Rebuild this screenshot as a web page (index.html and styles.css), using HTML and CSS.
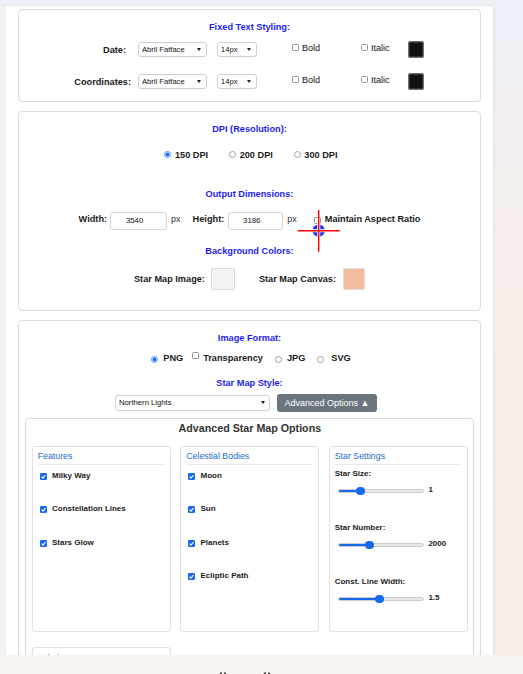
FILE: index.html
```html
<!DOCTYPE html>
<html lang="en">
<head>
<meta charset="utf-8">
<title>Star Map Export Settings</title>
<link rel="stylesheet" href="styles.css">
</head>
<body>
<div class="viewport">
  <div class="panel">

    <section class="card card-text">
      <h3 class="heading">Fixed Text Styling:</h3>
      <div class="text-row">
        <span class="row-label label-date">Date:</span>
        <div class="sel sel-font"><select><option>Abril Fatface</option></select><span class="caret"></span></div>
        <div class="sel sel-size"><select><option>14px</option></select><span class="caret"></span></div>
        <label class="chk chk-bold"><svg class="cb" viewBox="0 0 7 7"><rect x=".5" y=".5" width="6" height="6" rx="1" fill="#fff" stroke="#8a8a8a" stroke-width=".9"/></svg>Bold</label>
        <label class="chk chk-italic"><svg class="cb" viewBox="0 0 7 7"><rect x=".5" y=".5" width="6" height="6" rx="1" fill="#fff" stroke="#8a8a8a" stroke-width=".9"/></svg>Italic</label>
        <span class="swatch-dark"></span>
      </div>
      <div class="text-row row-two">
        <span class="row-label">Coordinates:</span>
        <div class="sel sel-font"><select><option>Abril Fatface</option></select><span class="caret"></span></div>
        <div class="sel sel-size"><select><option>14px</option></select><span class="caret"></span></div>
        <label class="chk chk-bold"><svg class="cb" viewBox="0 0 7 7"><rect x=".5" y=".5" width="6" height="6" rx="1" fill="#fff" stroke="#8a8a8a" stroke-width=".9"/></svg>Bold</label>
        <label class="chk chk-italic"><svg class="cb" viewBox="0 0 7 7"><rect x=".5" y=".5" width="6" height="6" rx="1" fill="#fff" stroke="#8a8a8a" stroke-width=".9"/></svg>Italic</label>
        <span class="swatch-dark"></span>
      </div>
    </section>

    <section class="card card-output">
      <h3 class="heading">DPI (Resolution):</h3>
      <div class="radio-row">
        <label class="opt"><svg class="rd" viewBox="0 0 7 7"><circle cx="3.5" cy="3.5" r="3" fill="#fff" stroke="#3d86f5" stroke-width=".9"/><circle cx="3.5" cy="3.5" r="1.9" fill="#1769f0"/></svg>150 DPI</label>
        <label class="opt"><svg class="rd" viewBox="0 0 7 7"><circle cx="3.5" cy="3.5" r="3" fill="#fff" stroke="#8a8a8a" stroke-width=".8"/></svg>200 DPI</label>
        <label class="opt"><svg class="rd" viewBox="0 0 7 7"><circle cx="3.5" cy="3.5" r="3" fill="#fff" stroke="#8a8a8a" stroke-width=".8"/></svg>300 DPI</label>
      </div>

      <h3 class="heading heading-dims">Output Dimensions:</h3>
      <div class="dims-row">
        <span class="b-label dim-w">Width:</span>
        <input class="num num-w" type="text" value="3540">
        <span class="px px-1">px</span>
        <span class="b-label dim-h">Height:</span>
        <input class="num num-h" type="text" value="3186">
        <span class="px px-2">px</span>
        <svg class="cb cb-aspect" viewBox="0 0 7 7"><rect x=".5" y=".5" width="6" height="6" rx="1" fill="#fff" stroke="#8a8a8a" stroke-width=".9"/></svg>
        <span class="b-label">Maintain Aspect Ratio</span>
      </div>

      <h3 class="heading heading-bg">Background Colors:</h3>
      <div class="colors-row">
        <span class="b-label">Star Map Image:</span>
        <span class="swatch swatch-image"></span>
        <span class="b-label">Star Map Canvas:</span>
        <span class="swatch swatch-canvas"></span>
      </div>
    </section>

    <section class="card card-format">
      <h3 class="heading">Image Format:</h3>
      <div class="format-row">
        <svg class="rd rd-png" viewBox="0 0 7 7"><circle cx="3.5" cy="3.5" r="3" fill="#fff" stroke="#3d86f5" stroke-width=".9"/><circle cx="3.5" cy="3.5" r="1.9" fill="#1769f0"/></svg>
        <span class="b-label f-png">PNG</span>
        <svg class="cb cb-trans" viewBox="0 0 7 7"><rect x=".5" y=".5" width="6" height="6" rx="1" fill="#fff" stroke="#8a8a8a" stroke-width=".9"/></svg>
        <span class="b-label f-trans">Transparency</span>
        <svg class="rd rd-jpg" viewBox="0 0 7 7"><circle cx="3.5" cy="3.5" r="3" fill="#fff" stroke="#8a8a8a" stroke-width=".8"/></svg>
        <span class="b-label f-jpg">JPG</span>
        <svg class="rd rd-svg" viewBox="0 0 7 7"><circle cx="3.5" cy="3.5" r="3" fill="#fff" stroke="#8a8a8a" stroke-width=".8"/></svg>
        <span class="b-label">SVG</span>
      </div>

      <h3 class="heading heading-style">Star Map Style:</h3>
      <div class="style-row">
        <div class="sel sel-style"><select><option>Northern Lights</option></select><span class="caret"></span></div>
        <button class="btn" type="button">Advanced Options ▲</button>
      </div>

      <div class="adv">
        <h2 class="adv-title">Advanced Star Map Options</h2>
        <div class="adv-grid">
          <div class="col">
            <h4 class="col-head">Features</h4>
            <div class="items">
              <label class="item"><svg class="cb" viewBox="0 0 7 7"><rect width="7" height="7" rx="1.2" fill="#1769f0"/><polyline points="1.6,3.7 3,5.1 5.5,2" fill="none" stroke="#fff" stroke-width="1.1"/></svg>Milky Way</label>
              <label class="item"><svg class="cb" viewBox="0 0 7 7"><rect width="7" height="7" rx="1.2" fill="#1769f0"/><polyline points="1.6,3.7 3,5.1 5.5,2" fill="none" stroke="#fff" stroke-width="1.1"/></svg>Constellation Lines</label>
              <label class="item"><svg class="cb" viewBox="0 0 7 7"><rect width="7" height="7" rx="1.2" fill="#1769f0"/><polyline points="1.6,3.7 3,5.1 5.5,2" fill="none" stroke="#fff" stroke-width="1.1"/></svg>Stars Glow</label>
            </div>
          </div>
          <div class="col">
            <h4 class="col-head">Celestial Bodies</h4>
            <div class="items">
              <label class="item"><svg class="cb" viewBox="0 0 7 7"><rect width="7" height="7" rx="1.2" fill="#1769f0"/><polyline points="1.6,3.7 3,5.1 5.5,2" fill="none" stroke="#fff" stroke-width="1.1"/></svg>Moon</label>
              <label class="item"><svg class="cb" viewBox="0 0 7 7"><rect width="7" height="7" rx="1.2" fill="#1769f0"/><polyline points="1.6,3.7 3,5.1 5.5,2" fill="none" stroke="#fff" stroke-width="1.1"/></svg>Sun</label>
              <label class="item"><svg class="cb" viewBox="0 0 7 7"><rect width="7" height="7" rx="1.2" fill="#1769f0"/><polyline points="1.6,3.7 3,5.1 5.5,2" fill="none" stroke="#fff" stroke-width="1.1"/></svg>Planets</label>
              <label class="item"><svg class="cb" viewBox="0 0 7 7"><rect width="7" height="7" rx="1.2" fill="#1769f0"/><polyline points="1.6,3.7 3,5.1 5.5,2" fill="none" stroke="#fff" stroke-width="1.1"/></svg>Ecliptic Path</label>
            </div>
          </div>
          <div class="col">
            <h4 class="col-head">Star Settings</h4>
            <div class="setting">
              <div class="set-label">Star Size:</div>
              <div class="slider-row">
                <div class="track"><div class="fill" style="width:26%"></div><span class="thumb" style="left:26%"></span></div>
                <span class="val">1</span>
              </div>
            </div>
            <div class="setting">
              <div class="set-label">Star Number:</div>
              <div class="slider-row">
                <div class="track"><div class="fill" style="width:36.5%"></div><span class="thumb" style="left:36.5%"></span></div>
                <span class="val">2000</span>
              </div>
            </div>
            <div class="setting">
              <div class="set-label">Const. Line Width:</div>
              <div class="slider-row">
                <div class="track"><div class="fill" style="width:48.5%"></div><span class="thumb" style="left:48.5%"></span></div>
                <span class="val">1.5</span>
              </div>
            </div>
          </div>
          <div class="col col-short">
            <h4 class="col-head">Labels</h4>
          </div>
        </div>
      </div>
    </section>

  </div>
</div>
<footer class="footer">
  <svg class="ficon" viewBox="0 0 14 6"><path d="M3.5 5.5 Q3.5 1 6 1" fill="none" stroke="#333" stroke-width="1.3"/><path d="M8 1 Q10.5 1 10.5 5.5" fill="none" stroke="#333" stroke-width="1.3"/></svg>
  <svg class="ficon" viewBox="0 0 14 6"><path d="M3.5 5.5 Q3.5 1 6 1" fill="none" stroke="#333" stroke-width="1.3"/><path d="M8 1 Q10.5 1 10.5 5.5" fill="none" stroke="#333" stroke-width="1.3"/></svg>
</footer>
<div class="cursor" aria-hidden="true">
  <svg viewBox="0 0 44 44" width="44" height="44">
    <circle cx="21.7" cy="21.7" r="6.2" fill="#1f3cf0"/>
    <line x1="21.7" y1="14" x2="21.7" y2="29.4" stroke="#fff" stroke-width="3"/>
    <line x1="14" y1="21.7" x2="29.4" y2="21.7" stroke="#fff" stroke-width="3"/>
    <line x1="0.7" y1="21.7" x2="42.7" y2="21.7" stroke="#f00" stroke-width="1.4"/>
    <line x1="21.7" y1="1" x2="21.7" y2="42.7" stroke="#f00" stroke-width="1.4"/>
  </svg>
</div>
</body>
</html>
```
FILE: styles.css
```css
* { box-sizing: border-box; }
html, body { margin: 0; padding: 0; }
body {
  width: 523px;
  height: 674px;
  overflow: hidden;
  position: relative;
  display: flex;
  flex-direction: column;
  font-family: "Liberation Sans", Arial, sans-serif;
  color: #1b1b1b;
  background: linear-gradient(180deg, #eef0f8 0px, #eef0f7 35px, #f4eff1 110px, #f7efea 300px, #f7eee9 100%);
}

.viewport { flex: 1; min-height: 0; overflow: hidden; padding-top: 6px; }
.panel {
  width: 493px;
  min-height: 100%;
  background: #fff;
  border-left: 6px solid #f2f2f3;
  box-shadow: 1px 0 2px rgba(0, 0, 0, 0.08);
  padding: 3px 12px 0 12px;
}

.card { border: 1px solid #dcdcdc; border-radius: 4px; background: #fff; margin-bottom: 9px; }
.card-text { padding: 11px 0 11px; }
.card-output { padding: 11px 0 20px; }
.card-format { padding: 11px 0 0; margin-top: 9.5px; }

.heading {
  margin: 0;
  font-size: 9.2px;
  line-height: 12px;
  font-weight: bold;
  color: #1e1ef5;
  text-align: center;
}

.b-label, .row-label { font-weight: bold; font-size: 9.2px; color: #1b1b1b; white-space: nowrap; }

/* fixed text styling rows */
.text-row { display: flex; align-items: center; height: 17px; margin-top: 8px; padding-left: 41px; }
.text-row.row-two { margin-top: 15px; }
.row-label { width: 71px; text-align: right; }
.label-date { padding-right: 5px; }

.sel {
  display: flex;
  align-items: center;
  height: 15px;
  border: 1px solid #cfcfcf;
  border-radius: 3px;
  background: #fff;
  padding: 0 5px 0 3px;
}
.sel select {
  -webkit-appearance: none;
  appearance: none;
  border: 0;
  background: transparent;
  font: 7.6px "Liberation Sans", Arial, sans-serif;
  color: #111;
  padding: 0;
  margin: 0;
  flex: 1;
  min-width: 0;
  outline: none;
}
.caret {
  flex: none;
  width: 0;
  height: 0;
  border-left: 2.5px solid transparent;
  border-right: 2.5px solid transparent;
  border-top: 3px solid #222;
}
.sel-font { width: 69px; margin-left: 7px; }
.sel-size { width: 40px; margin-left: 10px; }

.cb { width: 7px; height: 7px; flex: none; display: block; }
.rd { width: 7px; height: 7px; flex: none; display: block; }

.chk { display: flex; align-items: center; font-size: 9px; color: #111; margin-bottom: 4px; }
.chk .cb { margin-right: 3px; }
.chk-bold { width: 69px; margin-left: 35px; }
.chk-italic { width: 47px; }

.swatch-dark {
  width: 16px;
  height: 17px;
  background: #111;
  border: 1px solid #6e6e6e;
  border-radius: 2px;
  box-shadow: inset 0 0 0 1px #333;
}

/* DPI */
.radio-row {
  display: flex;
  justify-content: center;
  align-items: center;
  gap: 21px;
  height: 12px;
  margin-top: 13.5px;
  padding-left: 3px;
  font-weight: bold;
  font-size: 9.2px;
}
.opt { display: flex; align-items: center; }
.opt .rd { margin-right: 3.5px; }

.heading-dims { margin-top: 27.8px; }
.dims-row {
  display: flex;
  justify-content: center;
  align-items: center;
  height: 18.6px;
  margin-top: 11.4px;
}
.dims-row .b-label, .dims-row .px { margin-bottom: 3px; }
.dim-w { margin-right: 3px; }
.dim-h { margin-right: 4px; }
.num {
  height: 18.6px;
  border: 1px solid #d3d3d3;
  border-radius: 3px;
  font: 7.8px "Liberation Sans", Arial, sans-serif;
  color: #111;
  text-align: center;
  padding: 0 8px 0 0;
  margin: 0 4px 0 0;
  outline: none;
}
.num-w { width: 57px; }
.num-h { width: 55px; }
.px { font-size: 9px; color: #333; }
.px-1 { margin-right: 12px; }
.px-2 { margin-right: 17px; }
.cb-aspect { margin-right: 4px; margin-bottom: 1.5px; }

.heading-bg { margin-top: 14.4px; }
.colors-row {
  display: flex;
  justify-content: center;
  align-items: center;
  height: 22px;
  margin-top: 11.3px;
}
.swatch { height: 22px; border: 1px solid #dcdcdc; border-radius: 2px; margin-left: 6px; }
.swatch-image { width: 24px; background: #f5f3f1; margin-right: 24px; }
.swatch-canvas { width: 22px; background: #f4bc9f; margin-left: 7px; }

/* image format */
.format-row {
  display: flex;
  justify-content: center;
  align-items: center;
  height: 12px;
  margin-top: 7.2px;
  padding-left: 3px;
}
.format-row .rd { margin-top: 3.6px; }
.rd-png { margin-right: 5px; }
.f-png { margin-right: 9px; }
.cb-trans { margin-right: 4px; margin-bottom: 3.4px; }
.f-trans { margin-right: 12px; }
.rd-jpg { margin-right: 5px; }
.f-jpg { margin-right: 12px; }
.rd-svg { margin-right: 7px; }

.heading-style { margin-top: 13.3px; }
.style-row {
  display: flex;
  justify-content: center;
  align-items: center;
  height: 18px;
  margin-top: 5px;
  padding-right: 7px;
  gap: 7px;
}
.sel-style { width: 155px; height: 16px; padding-right: 4.5px; }
.sel-style select { font-size: 7.7px; }
.btn {
  width: 100px;
  height: 18px;
  border: 0;
  border-radius: 3px;
  background: #6c757d;
  color: #fff;
  font: 9px "Liberation Sans", Arial, sans-serif;
  padding: 0;
}

/* advanced */
.adv {
  margin: 6.3px 6px 0;
  border: 1px solid #dadada;
  border-radius: 4px;
  padding: 3px 5px 6px 5.7px;
}
.adv-title {
  margin: 0;
  text-align: center;
  font-size: 10.7px;
  line-height: 12px;
  font-weight: bold;
  color: #333;
}
.adv-grid {
  display: grid;
  grid-template-columns: repeat(3, 139px);
  column-gap: 9.5px;
  row-gap: 15.3px;
  margin-top: 11.4px;
}
.col {
  border: 1px solid #e1e1e1;
  border-radius: 3px;
  padding: 4.5px 6px 0 5px;
  min-height: 186.3px;
}
.col-short { min-height: 50px; }
.col-head {
  margin: 0;
  font-size: 8.8px;
  line-height: 10px;
  font-weight: normal;
  color: #1f6bc9;
  padding-bottom: 2.5px;
  border-bottom: 1px solid #e9e9e9;
}
.items { display: flex; flex-direction: column; gap: 23.3px; margin-top: 5.8px; }
.item { display: flex; align-items: center; height: 10px; font-weight: bold; font-size: 8px; color: #1b1b1b; }
.item .cb { margin: 2px 5px 0 2.3px; }

.setting { margin-top: 4.6px; }
.setting + .setting { margin-top: 27px; }
.set-label { font-weight: bold; font-size: 8px; line-height: 10px; color: #1b1b1b; }
.slider-row { display: flex; align-items: center; height: 10px; margin-top: 7px; }
.track {
  position: relative;
  width: 86px;
  height: 4px;
  margin-left: 3px;
  background: #e9e9e9;
  border: 1px solid #cdcdcd;
  border-radius: 2px;
}
.fill { height: 100%; background: #1769f0; border-radius: 2px; }
.thumb {
  position: absolute;
  top: 50%;
  width: 8.5px;
  height: 8.5px;
  margin: -4.25px 0 0 -4.25px;
  border-radius: 50%;
  background: #1769f0;
}
.val { margin-left: 4.7px; margin-bottom: 4px; font-weight: bold; font-size: 8px; color: #1b1b1b; }

/* footer */
.footer {
  flex: none;
  height: 19px;
  background: #f8f5f1;
  display: flex;
  align-items: flex-start;
  gap: 30px;
  padding: 16.5px 0 0 216px;
  overflow: hidden;
}
.ficon { width: 14px; height: 6px; display: block; flex: none; }

/* screen cursor captured in the shot */
.cursor {
  position: absolute;
  left: 297px;
  top: 209px;
  width: 44px;
  height: 44px;
  pointer-events: none;
}
.cursor svg { display: block; }
```
